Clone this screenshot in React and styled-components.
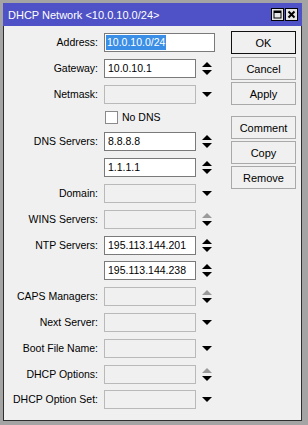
import React from "react";
import styled, { createGlobalStyle } from "styled-components";

const Global = createGlobalStyle`
  html, body { margin: 0; padding: 0; }
  body {
    background: #a4a4a4;
    font-family: "Liberation Sans", Arial, sans-serif;
    width: 308px;
    height: 425px;
    overflow: hidden;
  }
`;

const Window = styled.div`
  margin: 3px 0 0 3px;
  width: 299px;
  display: flex;
  flex-direction: column;
`;

const TitleBar = styled.div`
  height: 23px;
  background: #4f52c6;
  color: #fff;
  display: flex;
  align-items: center;
  justify-content: space-between;
  padding: 0 4px 0 5px;
  font-size: 11px;
`;

const TitleButtons = styled.div`
  display: flex;
  gap: 1px;
`;

const TitleBtn = styled.svg`
  display: block;
`;

const Body = styled.div`
  height: 394px;
  background: #f0f0f0;
  border: 1px solid #2e2e2e;
  border-top: none;
  display: flex;
`;

const Form = styled.div`
  width: 226px;
  padding-top: 7px;
  display: flex;
  flex-direction: column;
`;

const Row = styled.div`
  height: 19px;
  margin-bottom: 6.8px;
  display: flex;
  align-items: center;
`;

const Label = styled.div`
  width: 100px;
  padding-right: 6px;
  box-sizing: border-box;
  text-align: right;
  font-size: 10.5px;
  line-height: 19px;
  color: #000;
  white-space: nowrap;
`;

const Field = styled.div`
  width: ${(p) => p.$w || 92}px;
  height: 19px;
  box-sizing: border-box;
  border: 1px solid ${(p) => (p.$filled ? "#7a7a7a" : "#b9b9b9")};
  background: ${(p) => (p.$filled ? "#ffffff" : "#f0f0f0")};
  font-size: 10.5px;
  line-height: 17px;
  padding-left: ${(p) => (p.$selected ? 1 : 3)}px;
  color: #000;
  white-space: nowrap;
  overflow: hidden;
`;

const Selected = styled.span`
  background: #3a8ee6;
  color: #fff;
  padding: 1px 1px 2px 1px;
`;

const Arrow = styled.svg`
  display: block;
  margin-left: 6px;
`;

const CheckRow = styled.div`
  height: 22px;
  display: flex;
  align-items: flex-start;
  padding-left: 101px;
  padding-top: 1px;
  box-sizing: border-box;
`;

const CheckBox = styled.div`
  width: 11px;
  height: 11px;
  border: 1px solid #8a8a8a;
  background: #fff;
`;

const CheckLabel = styled.span`
  font-size: 10.5px;
  line-height: 13px;
  margin-left: 4px;
  color: #000;
`;

const Buttons = styled.div`
  padding-top: 5px;
  margin-left: 1px;
  display: flex;
  flex-direction: column;
`;

const Button = styled.div`
  width: 65px;
  height: 23px;
  box-sizing: border-box;
  border: 1px solid ${(p) => (p.$default ? "#111" : "#a9a9a9")};
  background: #f0f0f0;
  font-size: 11px;
  display: flex;
  align-items: center;
  justify-content: center;
  color: #000;
  margin-bottom: ${(p) => p.$mb ?? 2}px;
`;

const UpDown = ({ dim }) => (
  <Arrow width="10" height="13" viewBox="0 0 10 13">
    <polygon points="0,5 5,0 10,5" fill={dim ? "#9a9a9a" : "#000"} />
    <polygon points="0,8 10,8 5,13" fill="#000" />
  </Arrow>
);

const Down = () => (
  <Arrow width="10" height="5" viewBox="0 0 10 5">
    <polygon points="0,0 10,0 5,5" fill="#000" />
  </Arrow>
);

const FieldRow = ({ label, value, icon, dim }) => (
  <Row>
    <Label>{label}</Label>
    <Field $filled={!!value}>{value}</Field>
    {icon === "ud" ? <UpDown dim={dim} /> : <Down />}
  </Row>
);

export default function App() {
  return (
    <>
      <Global />
      <Window>
        <TitleBar>
          <span>DHCP Network &lt;10.0.10.0/24&gt;</span>
          <TitleButtons>
            <TitleBtn width="13" height="13" viewBox="0 0 13 13">
              <rect x="0.5" y="0.5" width="12" height="12" fill="#e6e6e6" stroke="#000" />
              <rect x="3" y="3" width="7" height="7" fill="none" stroke="#000" strokeWidth="1" />
              <rect x="3" y="3" width="7" height="2" fill="#000" />
            </TitleBtn>
            <TitleBtn width="13" height="13" viewBox="0 0 13 13">
              <rect x="0.5" y="0.5" width="12" height="12" fill="#e6e6e6" stroke="#000" />
              <path d="M3.5 3.5 L9.5 9.5 M9.5 3.5 L3.5 9.5" stroke="#000" strokeWidth="2" />
            </TitleBtn>
          </TitleButtons>
        </TitleBar>
        <Body>
          <Form>
            <Row>
              <Label>Address:</Label>
              <Field $filled $selected $w={111}>
                <Selected>10.0.10.0/24</Selected>
              </Field>
            </Row>
            <FieldRow label="Gateway:" value="10.0.10.1" icon="ud" />
            <FieldRow label="Netmask:" icon="down" />
            <CheckRow>
              <CheckBox />
              <CheckLabel>No DNS</CheckLabel>
            </CheckRow>
            <FieldRow label="DNS Servers:" value="8.8.8.8" icon="ud" />
            <FieldRow label="" value="1.1.1.1" icon="ud" />
            <FieldRow label="Domain:" icon="down" />
            <FieldRow label="WINS Servers:" icon="ud" dim />
            <FieldRow label="NTP Servers:" value="195.113.144.201" icon="ud" />
            <FieldRow label="" value="195.113.144.238" icon="ud" />
            <FieldRow label="CAPS Managers:" icon="ud" dim />
            <FieldRow label="Next Server:" icon="down" />
            <FieldRow label="Boot File Name:" icon="down" />
            <FieldRow label="DHCP Options:" icon="ud" dim />
            <FieldRow label="DHCP Option Set:" icon="down" />
          </Form>
          <Buttons>
            <Button $default $mb={3}>OK</Button>
            <Button>Cancel</Button>
            <Button $mb={11}>Apply</Button>
            <Button>Comment</Button>
            <Button>Copy</Button>
            <Button>Remove</Button>
          </Buttons>
        </Body>
      </Window>
    </>
  );
}
